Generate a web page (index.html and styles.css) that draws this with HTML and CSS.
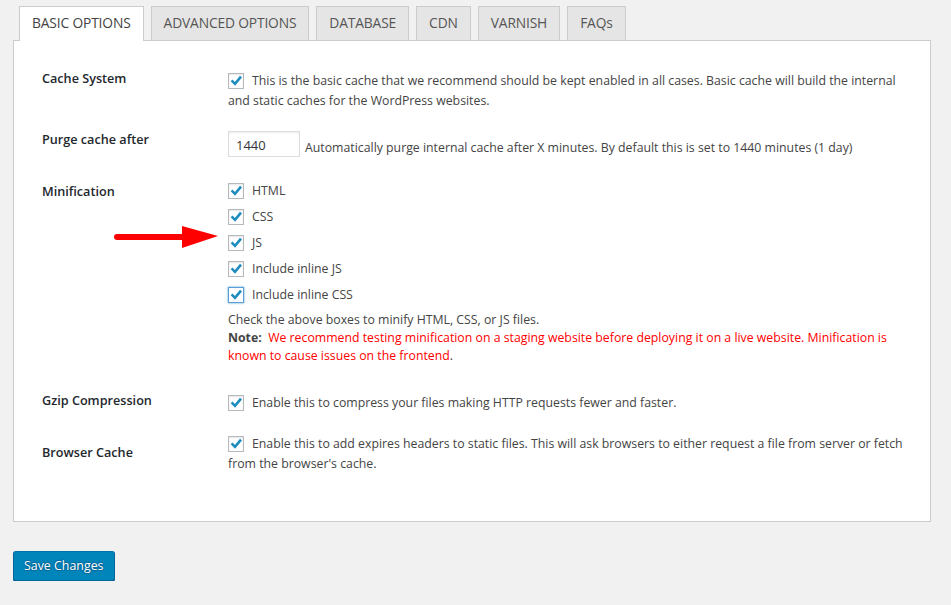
FILE: index.html
```html
<!DOCTYPE html>
<html lang="en">
<head>
<meta charset="utf-8">
<title>Cache Settings</title>
<link rel="stylesheet" href="styles.css">
</head>
<body>
<div class="wrap">
  <nav class="tabs">
    <a class="tab tab--active">BASIC OPTIONS</a>
    <a class="tab">ADVANCED OPTIONS</a>
    <a class="tab">DATABASE</a>
    <a class="tab">CDN</a>
    <a class="tab">VARNISH</a>
    <a class="tab">FAQs</a>
  </nav>
  <div class="panel">
    <div class="row row--cache">
      <div class="label">Cache System</div>
      <div class="field">
        <p class="line"><span class="cb"><svg viewBox="0 0 16 16"><path d="M3.6 7.4 L7 10.8 L13 3.6"/></svg></span>This is the basic cache that we recommend should be kept enabled in all cases. Basic cache will build the internal and static caches for the WordPress websites.</p>
      </div>
    </div>
    <div class="row row--purge">
      <div class="label">Purge cache after</div>
      <div class="field field--inline">
        <span class="input">1440</span>
        <span class="hint">Automatically purge internal cache after X minutes. By default this is set to 1440 minutes (1 day)</span>
      </div>
    </div>
    <div class="row row--minify">
      <div class="label">Minification</div>
      <div class="field">
        <p class="line opt"><span class="cb"><svg viewBox="0 0 16 16"><path d="M3.6 7.4 L7 10.8 L13 3.6"/></svg></span>HTML</p>
        <p class="line opt"><span class="cb"><svg viewBox="0 0 16 16"><path d="M3.6 7.4 L7 10.8 L13 3.6"/></svg></span>CSS</p>
        <p class="line opt"><span class="cb"><svg viewBox="0 0 16 16"><path d="M3.6 7.4 L7 10.8 L13 3.6"/></svg></span>JS</p>
        <p class="line opt"><span class="cb"><svg viewBox="0 0 16 16"><path d="M3.6 7.4 L7 10.8 L13 3.6"/></svg></span>Include inline JS</p>
        <p class="line opt"><span class="cb cb--focus"><svg viewBox="0 0 16 16"><path d="M3.6 7.4 L7 10.8 L13 3.6"/></svg></span>Include inline CSS</p>
        <p class="desc">Check the above boxes to minify HTML, CSS, or JS files.<br><strong>Note:</strong>&nbsp; <span class="warn">We recommend testing minification on a staging website before deploying it on a live website. Minification is known to cause issues on the frontend</span>.</p>
      </div>
    </div>
    <div class="row row--gzip">
      <div class="label">Gzip Compression</div>
      <div class="field">
        <p class="line"><span class="cb"><svg viewBox="0 0 16 16"><path d="M3.6 7.4 L7 10.8 L13 3.6"/></svg></span>Enable this to compress your files making HTTP requests fewer and faster.</p>
      </div>
    </div>
    <div class="row row--browser">
      <div class="label">Browser Cache</div>
      <div class="field">
        <p class="line"><span class="cb"><svg viewBox="0 0 16 16"><path d="M3.6 7.4 L7 10.8 L13 3.6"/></svg></span>Enable this to add expires headers to static files. This will ask browsers to either request a file from server or fetch from the browser's cache.</p>
      </div>
    </div>
    <svg class="arrow" width="110" height="30" viewBox="0 0 110 30">
      <line x1="3" y1="12" x2="70" y2="12" stroke="#ff0000" stroke-width="6" stroke-linecap="round"/>
      <polygon points="68,1 104,11 68,23" fill="#ff0000"/>
    </svg>
  </div>
  <button class="btn" type="button">Save Changes</button>
</div>
</body>
</html>
```

FILE: styles.css
```css
html, body {
  margin: 0;
  padding: 0;
}

body {
  background: #f1f1f1;
  font-family: "Open Sans", "Noto Sans", "Liberation Sans", sans-serif;
  font-size: 12.3px;
  color: #444;
}

.tabs {
  display: flex;
  align-items: flex-start;
  gap: 7px;
  box-sizing: border-box;
  height: 40px;
  padding: 6px 0 0 19px;
}

.tab {
  display: flex;
  align-items: center;
  box-sizing: border-box;
  height: 34px;
  padding: 0 12px 2px;
  border: 1px solid #ccc;
  border-bottom: 0;
  background: #e5e5e5;
  color: #555;
  font-size: 13.8px;
  letter-spacing: -0.15px;
}

.tab--active {
  position: relative;
  z-index: 1;
  height: 35px;
  margin-bottom: -1px;
  padding-bottom: 3px;
  background: #fff;
  color: #444;
}

.panel {
  position: relative;
  margin: 0 20px 0 13px;
  padding: 27px 0 47px 28px;
  background: #fff;
  border: 1px solid #ccc;
}

.row {
  display: grid;
  grid-template-columns: 186px 680px;
  align-items: start;
}

.label {
  font-size: 12.65px;
  font-weight: 600;
  color: #23282d;
  line-height: 20px;
}

.field {
  line-height: 20px;
}

.line {
  margin: 0;
}

.cb {
  display: inline-block;
  position: relative;
  box-sizing: border-box;
  width: 16px;
  height: 16px;
  margin-right: 8px;
  vertical-align: -4px;
  border: 1px solid #b4b9be;
  background: #fff;
  box-shadow: inset 0 1px 2px rgba(0, 0, 0, 0.1);
}

.cb svg {
  position: absolute;
  left: -1px;
  top: -1px;
  width: 16px;
  height: 16px;
  overflow: visible;
}

.cb path {
  fill: none;
  stroke: #1e8cbe;
  stroke-width: 2.6;
}

.cb--focus {
  border-color: #5b9dd9;
  box-shadow: 0 0 2px rgba(30, 140, 190, 0.8);
}

.row--cache .field {
  padding-top: 3px;
}

.row--purge {
  margin-top: 18px;
}

.row--purge .field {
  padding-top: 2px;
}

.field--inline {
  display: flex;
  align-items: flex-start;
}

.input {
  display: inline-block;
  box-sizing: border-box;
  width: 72px;
  height: 26px;
  padding: 2px 7px 0;
  line-height: 22px;
  border: 1px solid #ddd;
  box-shadow: inset 0 1px 2px rgba(0, 0, 0, 0.07);
  color: #32373c;
  font-size: 13px;
}

.hint {
  margin: 7px 0 0 5px;
}

.row--minify {
  margin-top: 22px;
}

.row--minify .label {
  padding-top: 1px;
}

.row--minify .field {
  padding-top: 1px;
}

.opt {
  margin-bottom: 6px;
}

.desc {
  margin: 0;
  line-height: 18px;
}

.desc strong {
  font-weight: 700;
}

.warn {
  color: #ff0000;
}

.row--gzip {
  margin-top: 25px;
}

.row--gzip .field {
  padding-top: 3px;
}

.row--browser {
  margin-top: 20px;
}

.row--browser .field {
  padding-top: 1px;
}

.row--browser .label {
  padding-top: 9px;
}

.arrow {
  position: absolute;
  left: 100px;
  top: 184px;
}

.btn {
  display: block;
  margin: 29px 0 0 13px;
  height: 30px;
  padding: 0 10px 1px;
  font-family: inherit;
  font-size: 12.4px;
  color: #fff;
  background: #0085ba;
  border: 1px solid;
  border-color: #0073aa #006799 #006799;
  border-radius: 3px;
  box-shadow: 0 1px 0 #006799;
  text-shadow: 0 -1px 1px #006799, 1px 0 1px #006799, 0 1px 1px #006799, -1px 0 1px #006799;
}
```
